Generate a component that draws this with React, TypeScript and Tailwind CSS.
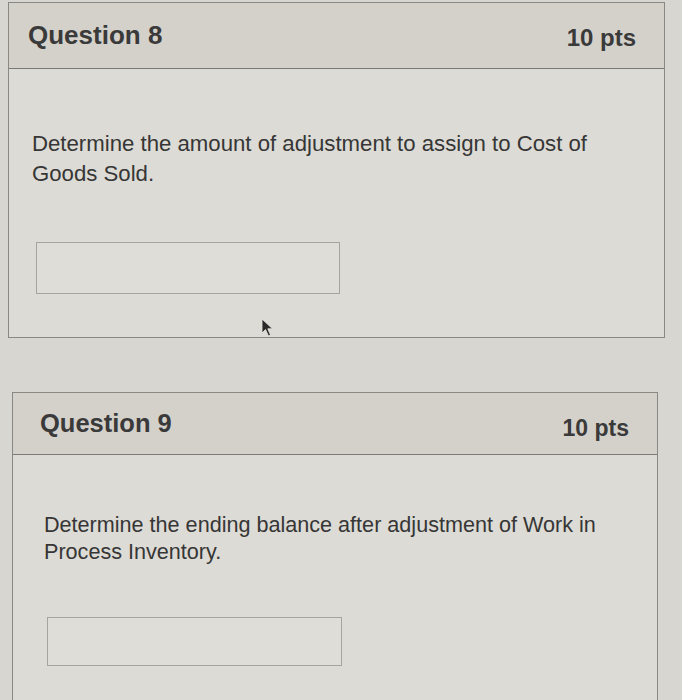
import React from "react";

function Cursor() {
  return (
    <svg width="14" height="20" viewBox="0 0 14 20" className="absolute left-[261px] top-[318px]">
      <path d="M1 1 L1 15 L4.5 11.5 L7.5 18 L9.5 17 L6.8 10.8 L11.5 10.8 Z" fill="#2a2a2a" stroke="#e8e6e0" strokeWidth="0.8" />
    </svg>
  );
}

export default function App() {
  return (
    <div
      className="relative h-[700px] w-[682px] overflow-hidden bg-[#d8d6d0] text-[#353535]"
      style={{ fontFamily: '"Liberation Sans", Arial, sans-serif' }}
    >
      {/* Question 8 */}
      <div className="ml-[8px] mt-[2px] w-[657px] border border-[#8a8884]">
        <div className="flex h-[66px] items-center justify-between border-b border-[#7c7a76] bg-[#d4d1cb] pl-[19px] pr-[28px]">
          <span className="text-[26px] font-bold text-[#3a3a3a]">Question 8</span>
          <span className="mt-[4px] text-[24px] font-bold text-[#3a3a3a]">10 pts</span>
        </div>
        <div className="h-[268px] bg-[#dddbd5] pl-[23px] pt-[60px]">
          <p className="text-[22.2px] leading-[30px] text-[#363636]">
            Determine the amount of adjustment to assign to Cost of
            <br />
            Goods Sold.
          </p>
          <div className="ml-[4px] mt-[53px] h-[52px] w-[304px] border border-[#a6a4a0] bg-[#dfddd7]" />
        </div>
      </div>

      <Cursor />

      {/* Question 9 */}
      <div className="ml-[12px] mt-[54px] w-[646px] border border-[#8a8884]">
        <div className="flex h-[62px] items-center justify-between border-b border-[#7c7a76] bg-[#d4d1cb] pl-[27px] pr-[28px]">
          <span className="text-[25.5px] font-bold text-[#3a3a3a]">Question 9</span>
          <span className="mt-[10px] text-[23px] font-bold text-[#3a3a3a]">10 pts</span>
        </div>
        <div className="h-[300px] bg-[#dddbd5] pl-[31px] pt-[56px]">
          <p className="text-[21.6px] leading-[27px] text-[#363636]">
            Determine the ending balance after adjustment of Work in
            <br />
            Process Inventory.
          </p>
          <div className="ml-[3px] mt-[52px] h-[49px] w-[295px] border border-[#a6a4a0] bg-[#dfddd7]" />
        </div>
      </div>
    </div>
  );
}
